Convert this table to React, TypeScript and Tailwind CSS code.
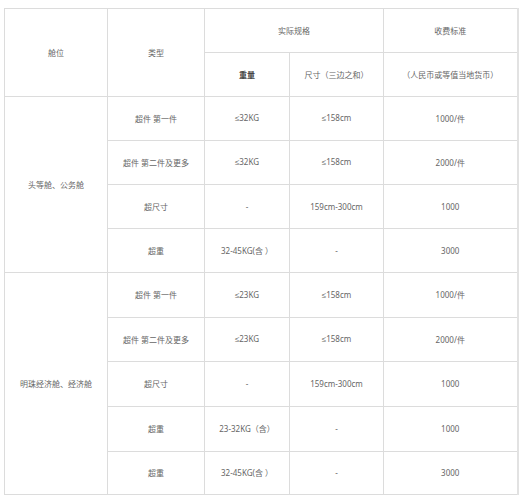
import React from "react";

const font = { fontFamily: '"Noto Sans", "Noto Sans CJK SC", sans-serif' };

type Row = { type: string; weight: string; size: string; fee: string; h: string };

const group1: Row[] = [
  { type: "超件 第一件", weight: "≤32KG", size: "≤158cm", fee: "1000/件", h: "h-[44px]" },
  { type: "超件 第二件及更多", weight: "≤32KG", size: "≤158cm", fee: "2000/件", h: "h-[44px]" },
  { type: "超尺寸", weight: "-", size: "159cm-300cm", fee: "1000", h: "h-[44px]" },
  { type: "超重", weight: "32-45KG(含 ）", size: "-", fee: "3000", h: "h-[44px]" },
];
const group2: Row[] = [
  { type: "超件 第一件", weight: "≤23KG", size: "≤158cm", fee: "1000/件", h: "h-[45px]" },
  { type: "超件 第二件及更多", weight: "≤23KG", size: "≤158cm", fee: "2000/件", h: "h-[44px]" },
  { type: "超尺寸", weight: "-", size: "159cm-300cm", fee: "1000", h: "h-[45px]" },
  { type: "超重", weight: "23-32KG（含）", size: "-", fee: "1000", h: "h-[45px]" },
  { type: "超重", weight: "32-45KG(含 ）", size: "-", fee: "3000", h: "h-[43px]" },
];

const cell = "border border-[#dcdcdc] text-center align-middle p-0";

function Txt({ s }: { s: string }) {
  if (s.startsWith("≤")) {
    return (
      <>
        <span className="font-['Liberation_Sans',sans-serif]">≤</span>
        {s.slice(1)}
      </>
    );
  }
  return <>{s}</>;
}

function Group({ label, rows }: { label: string; rows: Row[] }) {
  return (
    <>
      {rows.map((r, i) => (
        <tr key={i}>
          {i === 0 && (
            <td className={cell} rowSpan={rows.length}>
              {label}
            </td>
          )}
          <td className={`${cell} ${r.h}`}>{r.type}</td>
          <td className={cell}><Txt s={r.weight} /></td>
          <td className={cell}><Txt s={r.size} /></td>
          <td className={cell}>{r.fee}</td>
        </tr>
      ))}
    </>
  );
}

export default function App() {
  return (
    <div className="w-[528px] h-[500px] bg-white pt-[8px] pl-[4px]" style={font}>
      <table className="border-collapse table-fixed w-[513px] text-[8px] leading-[10px] text-[#666666] border-r-2 border-r-[#e2e2e2]">
        <colgroup>
          <col className="w-[103px]" />
          <col className="w-[97px]" />
          <col className="w-[85px]" />
          <col className="w-[94px]" />
          <col className="w-[134px]" />
        </colgroup>
        <tbody>
          <tr>
            <td className={cell} rowSpan={2}>舱位</td>
            <td className={cell} rowSpan={2}>类型</td>
            <td className={`${cell} h-[44px]`} colSpan={2}>实际规格</td>
            <td className={cell}>收费标准</td>
          </tr>
          <tr>
            <td className={`${cell} h-[44px] font-bold text-[#444444]`}>重量</td>
            <td className={cell}>尺寸（三边之和）</td>
            <td className={cell}>（人民币或等值当地货币）</td>
          </tr>
          <Group label="头等舱、公务舱" rows={group1} />
          <Group label="明珠经济舱、经济舱" rows={group2} />
        </tbody>
      </table>
    </div>
  );
}
